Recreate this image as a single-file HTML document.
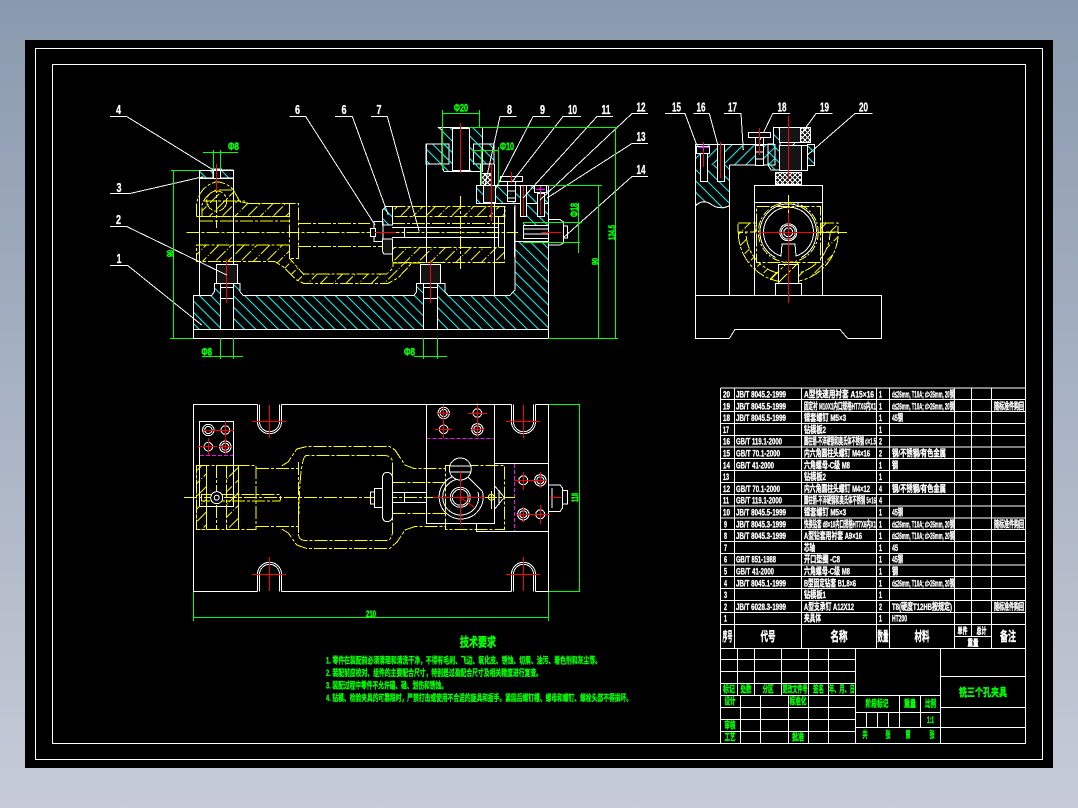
<!DOCTYPE html>
<html><head><meta charset="utf-8"><title>Drawing</title>
<style>
html,body{margin:0;padding:0;width:1078px;height:808px;overflow:hidden;background:linear-gradient(#8a9aae,#c6cbd7)}
svg{position:absolute;left:0;top:0;display:block}
.w{stroke:#fff;fill:none}.wk{stroke:#fff;fill:#000}.wd{stroke:#fff;fill:#141414}
.y{stroke:#ff0;fill:none;stroke-dasharray:13 2 3 2}.ys{stroke:#ff0;fill:none}
.r{stroke:#f00;fill:none;stroke-dasharray:16 2 4 2}.rs{stroke:#f00;fill:none}
.g{stroke:#0f0;fill:none}.m{stroke:#f0f;fill:none;stroke-dasharray:4 2}
.hc{fill:url(#c);stroke:#fff}.hy{fill:url(#h);stroke:#ff0;stroke-dasharray:13 2 3 2}
text{font-family:"Liberation Sans","Noto Sans CJK SC",sans-serif;font-weight:700}
.n{fill:#fff;font-size:12.5px;stroke:#fff;stroke-width:.3px}
.dim{fill:#0f0;font-size:11px;stroke:#0f0;stroke-width:.5px}
.b{fill:#fff;font-size:9.5px;stroke:#fff;stroke-width:.35px}
.bh{fill:#fff;font-size:13px;text-anchor:middle;stroke:#fff;stroke-width:.4px}
.bs{fill:#fff;font-size:9px;text-anchor:middle;stroke:#fff;stroke-width:.4px}
.t{fill:#0f0;font-size:9.5px;text-anchor:middle;stroke:#0f0;stroke-width:.4px}
.tq{fill:#0f0;font-size:9px;stroke:#0f0;stroke-width:.35px}
</style></head><body>
<svg width="1078" height="808" viewBox="0 0 1078 808" shape-rendering="crispEdges" stroke-width="1">
<defs>
<pattern id="c" width="8" height="8" patternUnits="userSpaceOnUse" patternTransform="rotate(-45)"><line x1="4" y1="0" x2="4" y2="8" stroke="#0ff"/></pattern>
<pattern id="c2" width="8" height="8" patternUnits="userSpaceOnUse" patternTransform="rotate(45)"><line x1="4" y1="0" x2="4" y2="8" stroke="#0ff"/></pattern>
<pattern id="h" width="9" height="18" patternUnits="userSpaceOnUse" patternTransform="rotate(45)"><line x1="4" y1="0" x2="4" y2="18" stroke="#ff0" stroke-dasharray="13 2 1 2"/></pattern>
<pattern id="k" width="5" height="5" patternUnits="userSpaceOnUse"><path d="M0 0L5 5M5 0L0 5" stroke="#fff"/></pattern>
</defs>
<rect x="25" y="40" width="1028" height="728" fill="#000"/>
<rect x="35.5" y="48.5" width="1007" height="711" class="w"/>
<rect x="52.5" y="64.5" width="973" height="679" class="w"/>

<!-- FRONT VIEW -->
<path d="M193.3 295.3H211.7L214.3 291.7V283.3H220.3V329.3H193.3Z" class="hc"/>
<path d="M233.7 283.3H240V291.7L243 295.3H414L416.7 291.7V283.3H423.3V329.3H233.7Z" class="hc"/>
<path d="M437.3 283.3H445V291.7L448 295.3H510L515 290V241.7H548.3V329.3H437.3Z" class="hc"/>
<path d="M528 203.3H548.3V225H523V216Z" fill="url(#c)"/>
<rect x="193.5" y="329.5" width="355" height="9" class="w"/>
<path d="M548.5 185.5V330M515 205V241.7M494.5 203V295.3" class="w"/>
<path d="M426.5 144V263M199.5 170V295M233.5 170V264" class="w"/>
<!-- top part -->
<path d="M426 144H449V164H426Z" class="hc"/>
<path d="M473.3 144H494V164H473.3Z" class="hc"/>
<path d="M438.3 127.3H482.7V171.7H444L442 165V130Z" class="hc"/>
<rect x="452.5" y="128.5" width="17" height="42" class="wk"/>
<path d="M476.5 185.5H548.5V203.5H476.5Z" class="hc"/>
<path d="M480.5 164V185.5M494.5 164V185.5" class="w"/>
<rect x="481.5" y="173.5" width="10" height="12" fill="url(#k)" stroke="#fff"/>
<rect x="483.5" y="185.5" width="12" height="17" class="wd"/>
<rect x="500.5" y="176.5" width="22" height="5" class="wk"/>
<path d="M507.5 181V185.5M515.5 181V185.5" class="w"/>
<rect x="507.5" y="185.5" width="8" height="16" class="wk"/><path d="M507.5 191H515.5M507.5 198H515.5" class="w"/>
<rect x="520.5" y="185.5" width="6" height="31" class="wk"/>
<rect x="534.5" y="185.5" width="12" height="7" class="wk"/>
<rect x="537.5" y="193.5" width="7" height="23" class="wk"/>
<!-- casting -->
<path d="M196.7 216.7V203.3Q200 186 216.7 181.7Q228 183 233.3 190L240 201.7L248.3 203.3H298.3V258.3H289.5V203.3M196.7 216.7H290" fill="none" stroke="#ff0" stroke-dasharray="13 2 3 2"/>
<path d="M233.3 190L240 201.7L248.3 203.3H289.5V216.7H202V205Q205 195 216 190Z" class="hy"/>
<circle cx="216.7" cy="201" r="10" class="y"/>
<path d="M196.7 245H289.5V258.3L303.3 274H386.7L393 268V263H420V262.7H392.7V247.3H504.3V262.7H420L411.7 263.3L398 278L388.3 283.3H303.3L296.7 280L283.3 266.7L275 261.7H196.7Z" class="hy"/>
<path d="M392.7 206.7H505V216.7H392.7Z" class="hy"/>
<path d="M186.7 232.5H518M298 223.5H370M298 246.5H382M392 223.5H504M216.7 180V228M203 201H245M200 221H290" class="y"/>
<path d="M426.5 223V263M494.5 207V262M514.5 207V223" class="w"/>
<!-- pins -->
<rect x="216.5" y="264.5" width="21" height="19" class="wd"/>
<rect x="420.5" y="264.5" width="20" height="19" class="wd"/>
<path d="M220.5 283.5V329M233.5 283.5V329M220.5 287.5H233.5M220.5 298.5H233.5M423.5 283.5V329M437.5 283.5V329M423.5 287.5H437.5M423.5 298.5H437.5" class="w"/>
<!-- rod -->
<rect x="374" y="221.5" width="9" height="20" class="wk"/>
<rect x="370.5" y="228.5" width="5" height="8" class="wk"/>
<path d="M382.7 210L386 206.7H392.7V225H382.7Z" class="hc"/>
<path d="M382.7 239H392.7V254H384L382.7 252Z" class="wd"/>
<path d="M392 227.5H498M392 237.5H498M404.5 227V237M498.5 216V247M504.5 206V257M514.5 223V257" class="w"/>
<rect x="523.5" y="225.5" width="25" height="13" class="wk"/>
<path d="M523.5 229H548M523.5 234H548" class="w"/>
<path d="M548.5 219.5H560L563.5 222V243L560 245H548.5ZM563.5 226H567.5V238H563.5" class="wk"/>
<path d="M213.5 170H233.5M199.5 170.5H233.5M199.5 178.5H233.5" class="w"/>
<path d="M199.5 170.5H213V178H199.5ZM220.5 170.5H233.5V178H220.5Z" class="hc"/>
<path d="M213.5 168V178M220.5 168V178M212 169H222" class="w"/>
<!-- red centre -->
<path d="M216.5 164V191M226.5 259V303M430.5 260V303M460.5 123V173M511.5 172V183M523.5 186V216M540.5 193V215" class="rs"/>
<path d="M491.5 165V221" class="rs"/>
<path d="M375 232.5H396M541.7 232.5H561.7" class="rs"/>
<path d="M536 189.5H545M540.5 186V193" stroke="#f0f" fill="none"/>
<path d="M460.5 196V270" class="y"/>
<!-- leaders -->
<g class="w">
<path d="M110 116.5H126.7L213.3 170"/><path d="M110 193.5H130L203.3 176.7"/><path d="M110 226.5H126.7L226.7 275"/><path d="M110 265.5H127.7L201.7 325"/>
<path d="M289.3 116.5H305.7L375 225"/><path d="M335 116.5H352.3L388.3 215"/><path d="M371 116.5H387.3L419.3 231.7"/>
<path d="M516.7 116.5H500L485 185"/><path d="M550 116.5H533L495 190"/><path d="M581 116.5H563L512 182"/><path d="M613 116.5H597L523 198"/>
<path d="M648 113.5H632L540 200"/><path d="M648 143.5H632L547 198"/><path d="M648 176.5H632L563 238"/>
<path d="M665 113.5H685L696.7 145"/><path d="M693.3 113.5H709.3L720 153"/><path d="M724 113.5H741L743.3 150"/><path d="M790 113.5H772.7L760 140"/><path d="M832.7 113.5H816L788.3 151.7"/><path d="M872.3 113.5H855L804 158"/>
</g>
<g class="n">
<text x="116" y="114" textLength="5" lengthAdjust="spacingAndGlyphs">4</text><text x="116.5" y="192" textLength="5" lengthAdjust="spacingAndGlyphs">3</text><text x="116" y="224" textLength="5" lengthAdjust="spacingAndGlyphs">2</text><text x="116.5" y="263" textLength="5" lengthAdjust="spacingAndGlyphs">1</text>
<text x="295" y="114" textLength="5" lengthAdjust="spacingAndGlyphs">6</text><text x="341.5" y="114" textLength="5" lengthAdjust="spacingAndGlyphs">6</text><text x="376.5" y="114" textLength="5" lengthAdjust="spacingAndGlyphs">7</text><text x="507" y="114" textLength="5" lengthAdjust="spacingAndGlyphs">8</text><text x="540" y="114" textLength="5" lengthAdjust="spacingAndGlyphs">9</text><text x="568" y="114" textLength="9" lengthAdjust="spacingAndGlyphs">10</text><text x="601.5" y="114" textLength="9" lengthAdjust="spacingAndGlyphs">11</text><text x="636.5" y="111.5" textLength="9" lengthAdjust="spacingAndGlyphs">12</text><text x="636.5" y="141" textLength="9" lengthAdjust="spacingAndGlyphs">13</text><text x="636.5" y="174" textLength="9" lengthAdjust="spacingAndGlyphs">14</text>
<text x="672" y="111.5" textLength="9" lengthAdjust="spacingAndGlyphs">15</text><text x="696.5" y="111.5" textLength="9" lengthAdjust="spacingAndGlyphs">16</text><text x="728" y="111.5" textLength="9" lengthAdjust="spacingAndGlyphs">17</text><text x="777.5" y="111.5" textLength="9" lengthAdjust="spacingAndGlyphs">18</text><text x="820" y="111.5" textLength="9" lengthAdjust="spacingAndGlyphs">19</text><text x="859" y="111.5" textLength="9" lengthAdjust="spacingAndGlyphs">20</text>
</g>
<!-- green dims -->
<g class="g">
<path d="M173.5 170V338M171 170.5H199M170 338.5H193M213.5 150V170M220.5 150V170M203 152.5H238"/>
<path d="M220.5 338V359M233.5 338V359M202 356.5H243M423.5 338V359M437.5 338V359M414 356.5H447"/>
<path d="M442.5 110V170M479.5 110V127M442 113.5H479M481.5 147V185M498.5 147V185M472 150.5H498"/>
<path d="M469 127.5H618M548 185.5H602M548 338.5H618M598.5 185V338M615.5 127V338M523 222.5H582M523 242.5H580M578.5 203V253"/>
<path d="M193.5 591V621M548.5 591V621M193 617.5H548M548 404.5H580M548 591.5H580M579.5 404V592"/>
</g>
<g class="dim">
<text x="228" y="150" textLength="11" lengthAdjust="spacingAndGlyphs">Φ8</text><text transform="translate(173,257) rotate(-90)" textLength="7" lengthAdjust="spacingAndGlyphs" style="font-size:8px">90</text><text x="201.5" y="355.5" textLength="10.5" lengthAdjust="spacingAndGlyphs">Φ8</text><text x="404" y="355.5" textLength="11" lengthAdjust="spacingAndGlyphs">Φ8</text>
<text x="454" y="111.5" textLength="14" lengthAdjust="spacingAndGlyphs">Φ20</text><text x="500" y="150" textLength="14" lengthAdjust="spacingAndGlyphs">Φ10</text>
<text transform="translate(598,265) rotate(-90)" textLength="7" lengthAdjust="spacingAndGlyphs" style="font-size:8px">90</text>
<text transform="translate(615,240) rotate(-90)" textLength="15" lengthAdjust="spacingAndGlyphs" style="font-size:9px">134.5</text>
<text transform="translate(578,217) rotate(-90)" textLength="14" lengthAdjust="spacingAndGlyphs">Φ18</text>
<text x="366" y="617" textLength="10" lengthAdjust="spacingAndGlyphs" style="font-size:9px">210</text>
<text transform="translate(578,502) rotate(-90)" textLength="9" lengthAdjust="spacingAndGlyphs" style="font-size:9px">118</text>
</g>

<!-- SIDE VIEW -->
<path d="M695.5 295.5H881.5V338.5H847.7L840 329.5H735L729.3 338.5H695.5Z" class="wk"/>
<path d="M695.3 144.3H775V165H695.3Z" fill="url(#c2)"/>
<path d="M695.3 165H729.3V206Q722 212 715 204Q705 198 695.3 206Z" fill="url(#c)"/>
<path d="M695.5 144.5H775V165H729.5M695.5 144V295M729.5 165V295" class="w"/>
<path d="M695.5 206Q703 198 712 205Q720 210 729 206" class="w"/>
<path d="M768 165V144H773.5V127.7H780V170H771Z" class="hc"/>
<rect x="807.5" y="144.5" width="7" height="21" class="hc"/>
<rect x="779.5" y="127.5" width="31" height="15" fill="url(#k)" stroke="#fff"/>
<rect x="779.5" y="127.5" width="21" height="15" class="wd"/>
<rect x="779.5" y="145.5" width="22" height="25" class="wd"/><rect x="801.5" y="145.5" width="6" height="25" class="wk"/>
<rect x="775.5" y="172.5" width="26" height="12" fill="url(#k)" stroke="#fff"/>
<rect x="748.5" y="132.5" width="22" height="5" class="wk"/><path d="M755.5 138V145M763.5 138V145" class="w"/>
<rect x="755.5" y="145.5" width="8" height="20" class="wk"/><path d="M755.5 152H763.5M755.5 159H763.5" class="w"/>
<rect x="700.5" y="153.5" width="7" height="28" class="wk"/><rect x="696.5" y="146.5" width="13" height="7" class="wk"/>
<rect x="717.5" y="144.5" width="7" height="37" class="wk"/>
<rect x="754.5" y="185.5" width="68" height="110" class="w"/><path d="M754.5 202.5H822.5" class="w"/>
<path d="M738.3 232.3A50 50 0 0 0 838.3 232.3H830A42 42 0 0 1 746 232.3Z" class="hy"/>
<path d="M738 223H756V232H738ZM821 223H838V232H821Z" class="hy"/>
<rect x="756.5" y="206.5" width="64" height="56" fill="#000" stroke="#ff0" stroke-dasharray="13 2 3 2"/>
<path d="M754.5 202V295M822.5 202V295" class="w"/>
<circle cx="788.3" cy="232.3" r="30" stroke="#ff0" stroke-dasharray="8 2 2 2" fill="none"/>
<path d="M775.5 257.5A28.3 28.3 0 1 1 801 257.5" class="w"/>
<path d="M781 256A25 25 0 1 1 796 256L795 244H782Z" class="w"/>
<circle cx="788.3" cy="232.3" r="8.5" class="wk"/><circle cx="788.3" cy="232.3" r="7" class="w"/><circle cx="788.3" cy="232.3" r="4.5" class="wk"/>
<rect x="778.5" y="264.5" width="20" height="19" class="wk"/>
<path d="M778 283L798 263M770 280L786 264" class="y"/>
<path d="M775.5 295V283.5H801.5V295" class="w"/>
<path d="M788.5 116V180M788.5 195V303M759.5 128V155M703.5 142V167M720.5 142V178" class="rs"/>
<path d="M759 232.5H817" class="rs"/>
<path d="M817 232.5H847M788.5 195V215" class="y"/>
<path d="M698 147.5H709M703.5 144V151" stroke="#f0f" fill="none"/>

<!-- PLAN VIEW -->
<path d="M257.5 404.5H193.5V591.5H257.5M281.5 404.5H511.5M535.5 404.5H548.5V591.5H535.5M511.5 591.5H281.5" class="w"/>
<path d="M257.5 404.5V421.7A12 12 0 0 0 281.5 421.7V404.5M259.5 404.5V421.7A10 10 0 0 0 279.5 421.7V404.5M511.5 404.5V421.7A12 12 0 0 0 535.5 421.7V404.5M513.5 404.5V421.7A10 10 0 0 0 533.5 421.7V404.5" class="w"/>
<path d="M257.5 591.5V574.3A12 12 0 0 1 281.5 574.3V591.5M259.5 591.5V574.3A10 10 0 0 1 279.5 574.3V591.5M511.5 591.5V574.3A12 12 0 0 1 535.5 574.3V591.5M513.5 591.5V574.3A10 10 0 0 1 533.5 574.3V591.5" class="w"/>
<path d="M252 421.5H286M269.5 405V438M252 574.5H286M269.5 557V591M506 421.5H540M523.5 405V438M506 574.5H540M523.5 557V591" class="rs"/>
<rect x="199.5" y="421.5" width="34" height="85" class="w"/>
<g class="w">
<circle cx="208.3" cy="430" r="5.7"/><circle cx="208.3" cy="430" r="3.6"/><circle cx="225.3" cy="430" r="4.3"/><circle cx="208.3" cy="446.7" r="4.3"/><circle cx="225.3" cy="446.7" r="5.7"/><circle cx="225.3" cy="446.7" r="3.6"/>
<circle cx="443.7" cy="413" r="5.7"/><circle cx="443.7" cy="413" r="3.6"/><circle cx="477.3" cy="413" r="4.3"/><circle cx="443.7" cy="429.3" r="4.3"/><circle cx="477.3" cy="429.3" r="5.7"/><circle cx="477.3" cy="429.3" r="3.6"/>
<circle cx="523.3" cy="480.3" r="4.5"/><circle cx="540.3" cy="480.3" r="5.7"/><circle cx="540.3" cy="480.3" r="3.6"/><circle cx="523.3" cy="514.3" r="5.7"/><circle cx="523.3" cy="514.3" r="3.6"/><circle cx="540.3" cy="514.3" r="4.5"/>
</g>
<path d="M203 430.5H216M225.5 421V437M216 430.5H234M208.5 438V456M198 446.5H217M225.5 438V454M219 446.5H232" class="rs"/>
<path d="M443.5 405V421M437 413.5H450M477.5 403V421M468 413.5H487M443.5 420V438M435 429.5H452M477.5 421V437M471 429.5H484M523.5 472V490M514 480.5H533M540.5 472V488M533 480.5H547M523.5 507V522M516 514.5H531M540.5 505V524M531 514.5H550" class="rs"/>
<path d="M200 455.5H233M426.5 438.5H494M514.5 464V532" class="m"/>
<!-- yellow body -->
<path d="M196.5 465.5H256V529.5H196.5ZM206.5 465V529M216.5 465V529M226.5 465V529M238.5 465V529" class="y"/>
<path d="M196.5 465.5H206.5V529.5H196.5ZM226.5 465.5H238.5V529.5H226.5Z" class="hy"/>
<path d="M256 468.5H298.5M256 526.5H298.5M298.5 462V533Q299 453 307 455.5H385Q393 456 392.5 464V532Q392 541 385 540.5H307Q298 541 298.5 533" class="y"/>
<path d="M281.7 466L288.3 461.7L296.7 449L306 446.7H390L395 450L405 465L413.3 468.3H445.7M281.7 529L288.3 533L296.7 545L306 548.3H390L397.3 541.7L405 530L415 526.5H445.7" class="y"/>
<path d="M201.7 494.5H280Q281 498 280 501H201.7ZM392.7 482.5H445M392.7 513.5H445" class="y"/>
<rect x="445.5" y="465.5" width="59" height="64" class="y"/>
<path d="M184 497.5H515" class="y"/>
<rect x="426.5" y="404.5" width="68" height="119" class="w"/>
<path d="M494.5 463.5H548.5M476.5 523.5V531.5H548.5" class="w"/>
<circle cx="216.7" cy="497.7" r="6" class="wk"/><circle cx="216.7" cy="497.7" r="2.5" class="w"/>
<!-- washer etc -->
<path d="M382.5 478Q382.5 472.5 387 472.5Q392.5 472.5 392.5 478V516Q392.5 521.5 387 521.5Q382.5 521.5 382.5 516Z" class="wk"/>
<rect x="374.5" y="488.5" width="8" height="19" class="wk"/><path d="M374.5 492H370.5V504H374.5" class="w"/>
<path d="M392.5 492.5H426M392.5 502.5H426M404.5 492.5V502.5" class="w"/>
<path d="M460 475A22 22 0 1 0 482.5 491.7L468 477M460 479A18 18 0 1 0 478 492" class="w" />
<circle cx="460.3" cy="497.3" r="10" class="w"/><circle cx="460.3" cy="497.3" r="8" class="w"/>
<circle cx="460.3" cy="469" r="11" class="wk"/><path d="M449.5 466H471M449.5 472H471" class="w"/>
<path d="M494.5 485.7L504.3 497.3L494.5 509.3M499 490V505" class="w"/>
<path d="M548.5 485H560L562.5 488V508L560 511.5H548.5ZM552 488V508M562.5 490.5H567.5V504H562.5" class="wk"/>
<circle cx="491.3" cy="497.3" r="3" class="ys"/><path d="M491.5 491V509M487 497.5H496" class="ys"/>
<path d="M460.5 471V525M433 497.5H485M460.3 497.3L474 507" class="rs"/>
<path d="M550 497.5H561" class="rs"/>

<!-- TECH REQUIREMENTS -->
<text x="460" y="646.5" fill="#0f0" font-size="12.5" textLength="36" lengthAdjust="spacingAndGlyphs" stroke="#0f0" stroke-width=".5">技术要求</text>
<text class="tq" x="326" y="663.5" textLength="275" lengthAdjust="spacingAndGlyphs">1. 零件在装配前必须清理和清洗干净，不得有毛刺、飞边、氧化皮、锈蚀、切屑、油污、着色剂和灰尘等。</text>
<text class="tq" x="326" y="676" textLength="216" lengthAdjust="spacingAndGlyphs">2. 装配前应校对、组件的主要配合尺寸，特别是过盈配合尺寸及相关精度进行复查。</text>
<text class="tq" x="326" y="688.5" textLength="121" lengthAdjust="spacingAndGlyphs">3. 装配过程中零件不允许磕、碰、划伤和锈蚀。</text>
<text class="tq" x="326" y="701" textLength="306" lengthAdjust="spacingAndGlyphs">4. 钻模、检验夹具的可靠限时，严禁打击或使用不合适的旋具和扳手。紧固后螺钉槽、螺母和螺钉、螺栓头部不得损坏。</text>

<!-- BOM GRID -->
<g class="w">
<path d="M720.5 388H1025.5M720.5 399.5H1025.5M720.5 411.5H1025.5M720.5 423.5H1025.5M720.5 435.5H1025.5M720.5 447H1025.5M720.5 458.5H1025.5M720.5 470.5H1025.5M720.5 482.5H1025.5M720.5 494.5H1025.5M720.5 506H1025.5M720.5 518H1025.5M720.5 529.5H1025.5M720.5 541.5H1025.5M720.5 553.5H1025.5M720.5 565H1025.5M720.5 576.5H1025.5M720.5 588.5H1025.5M720.5 600.5H1025.5M720.5 612.5H1025.5M720.5 624.5H1025.5M720.5 648.5H1025.5"/>
<path d="M720.5 388V743.5M734.5 388V648M801.5 388V648M876.5 388V648M889.5 388V648M954.5 388V648M971.5 388V636M991.5 388V648M954.5 636.5H991.5"/>
<path d="M720.5 659.5H855M720.5 671.5H855M720.5 683.5H855M720.5 695.5H940M720.5 707.5H855M720.5 719.5H855M720.5 731.5H855M720.5 743.5H1025.5"/>
<path d="M737.5 648V695M754.5 648V695M781.5 648V695M808.5 648V743M828.5 648V743M855.5 648V743M740.5 695V743M760.5 695V743M788.5 695V743M940.5 648V743"/>
<path d="M855.5 712.5H940.5M855.5 727.5H1025.5M899.5 695V727M920.5 695V727M866.5 712V727M877.5 712V727M888.5 712V727M940.5 676.5H1025.5M940.5 707.5H1025.5"/>
</g>
<g class="b">
<text x="723" y="397.5" textLength="7" lengthAdjust="spacingAndGlyphs">20</text><text x="736" y="397.5" textLength="50" lengthAdjust="spacingAndGlyphs">JB/T 8045.2-1999</text><text x="804" y="397.5" textLength="70" lengthAdjust="spacingAndGlyphs">A型快速用衬套 A15×16</text><text x="879" y="397.5" textLength="3" lengthAdjust="spacingAndGlyphs">1</text><text x="892" y="397.5" textLength="62" lengthAdjust="spacingAndGlyphs">d≤26mm, T10A; d&gt;26mm, 20钢</text>
<text x="723" y="409.3" textLength="7" lengthAdjust="spacingAndGlyphs">19</text><text x="736" y="409.3" textLength="50" lengthAdjust="spacingAndGlyphs">JB/T 8045.5-1999</text><text x="804" y="409.3" textLength="72" lengthAdjust="spacingAndGlyphs">固定衬 M10X1内口规格HT7X6内X1</text><text x="879" y="409.3" textLength="3" lengthAdjust="spacingAndGlyphs">1</text><text x="892" y="409.3" textLength="62" lengthAdjust="spacingAndGlyphs">d≤26mm, T10A; d&gt;26mm, 20钢</text><text x="994" y="409.3" textLength="30" lengthAdjust="spacingAndGlyphs">随标准件购回</text>
<text x="723" y="421.1" textLength="7" lengthAdjust="spacingAndGlyphs">18</text><text x="736" y="421.1" textLength="50" lengthAdjust="spacingAndGlyphs">JB/T 8045.5-1999</text><text x="804" y="421.1" textLength="42" lengthAdjust="spacingAndGlyphs">镗套螺钉 M5×3</text><text x="879" y="421.1" textLength="3" lengthAdjust="spacingAndGlyphs">1</text><text x="892" y="421.1" textLength="11" lengthAdjust="spacingAndGlyphs">45钢</text>
<text x="723" y="432.9" textLength="6" lengthAdjust="spacingAndGlyphs">17</text><text x="804" y="432.9" textLength="22" lengthAdjust="spacingAndGlyphs">钻模板2</text><text x="879" y="432.9" textLength="3" lengthAdjust="spacingAndGlyphs">1</text>
<text x="723" y="444.7" textLength="7" lengthAdjust="spacingAndGlyphs">16</text><text x="736" y="444.7" textLength="46" lengthAdjust="spacingAndGlyphs">GB/T 119.1-2000</text><text x="804" y="444.7" textLength="72" lengthAdjust="spacingAndGlyphs">圆柱销-不淬硬钢和奥氏体不锈钢 d×1.5</text><text x="879" y="444.7" textLength="3" lengthAdjust="spacingAndGlyphs">2</text>
<text x="723" y="456.5" textLength="7" lengthAdjust="spacingAndGlyphs">15</text><text x="736" y="456.5" textLength="44" lengthAdjust="spacingAndGlyphs">GB/T 70.1-2000</text><text x="804" y="456.5" textLength="66" lengthAdjust="spacingAndGlyphs">内六角圆柱头螺钉 M4×16</text><text x="879" y="456.5" textLength="3" lengthAdjust="spacingAndGlyphs">2</text><text x="892" y="456.5" textLength="54" lengthAdjust="spacingAndGlyphs">钢/不锈钢/有色金属</text>
<text x="723" y="468.3" textLength="7" lengthAdjust="spacingAndGlyphs">14</text><text x="736" y="468.3" textLength="38" lengthAdjust="spacingAndGlyphs">GB/T 41-2000</text><text x="804" y="468.3" textLength="46" lengthAdjust="spacingAndGlyphs">六角螺母-C级 M8</text><text x="879" y="468.3" textLength="3" lengthAdjust="spacingAndGlyphs">1</text><text x="892" y="468.3" textLength="6" lengthAdjust="spacingAndGlyphs">钢</text>
<text x="723" y="480.1" textLength="6" lengthAdjust="spacingAndGlyphs">13</text><text x="804" y="480.1" textLength="22" lengthAdjust="spacingAndGlyphs">钻模板2</text><text x="879" y="480.1" textLength="3" lengthAdjust="spacingAndGlyphs">1</text>
<text x="723" y="491.9" textLength="7" lengthAdjust="spacingAndGlyphs">12</text><text x="736" y="491.9" textLength="44" lengthAdjust="spacingAndGlyphs">GB/T 70.1-2000</text><text x="804" y="491.9" textLength="66" lengthAdjust="spacingAndGlyphs">内六角圆柱头螺钉 M4×12</text><text x="879" y="491.9" textLength="3" lengthAdjust="spacingAndGlyphs">4</text><text x="892" y="491.9" textLength="54" lengthAdjust="spacingAndGlyphs">钢/不锈钢/有色金属</text>
<text x="723" y="503.7" textLength="6" lengthAdjust="spacingAndGlyphs">11</text><text x="736" y="503.7" textLength="46" lengthAdjust="spacingAndGlyphs">GB/T 119.1-2000</text><text x="804" y="503.7" textLength="72" lengthAdjust="spacingAndGlyphs">圆柱销-不淬硬钢和奥氏体不锈钢 5×16</text><text x="879" y="503.7" textLength="3" lengthAdjust="spacingAndGlyphs">4</text>
<text x="723" y="515.5" textLength="7" lengthAdjust="spacingAndGlyphs">10</text><text x="736" y="515.5" textLength="50" lengthAdjust="spacingAndGlyphs">JB/T 8045.5-1999</text><text x="804" y="515.5" textLength="42" lengthAdjust="spacingAndGlyphs">镗套螺钉 M5×3</text><text x="879" y="515.5" textLength="3" lengthAdjust="spacingAndGlyphs">1</text><text x="892" y="515.5" textLength="11" lengthAdjust="spacingAndGlyphs">45钢</text>
<text x="724" y="527.3" textLength="3" lengthAdjust="spacingAndGlyphs">9</text><text x="736" y="527.3" textLength="50" lengthAdjust="spacingAndGlyphs">JB/T 8045.3-1999</text><text x="804" y="527.3" textLength="72" lengthAdjust="spacingAndGlyphs">快换钻套 d8×10内口规格HT7X6内X1</text><text x="879" y="527.3" textLength="3" lengthAdjust="spacingAndGlyphs">1</text><text x="892" y="527.3" textLength="62" lengthAdjust="spacingAndGlyphs">d≤26mm, T10A; d&gt;26mm, 20钢</text><text x="994" y="527.3" textLength="30" lengthAdjust="spacingAndGlyphs">随标准件购回</text>
<text x="724" y="539.1" textLength="3" lengthAdjust="spacingAndGlyphs">8</text><text x="736" y="539.1" textLength="50" lengthAdjust="spacingAndGlyphs">JB/T 8045.3-1999</text><text x="804" y="539.1" textLength="58" lengthAdjust="spacingAndGlyphs">A型钻套用衬套 A9×16</text><text x="879" y="539.1" textLength="3" lengthAdjust="spacingAndGlyphs">1</text><text x="892" y="539.1" textLength="62" lengthAdjust="spacingAndGlyphs">d≤26mm, T10A; d&gt;26mm, 20钢</text>
<text x="724" y="550.9" textLength="3" lengthAdjust="spacingAndGlyphs">7</text><text x="804" y="550.9" textLength="11" lengthAdjust="spacingAndGlyphs">芯轴</text><text x="879" y="550.9" textLength="3" lengthAdjust="spacingAndGlyphs">1</text><text x="892" y="550.9" textLength="6" lengthAdjust="spacingAndGlyphs">45</text>
<text x="724" y="562.7" textLength="3" lengthAdjust="spacingAndGlyphs">6</text><text x="736" y="562.7" textLength="40" lengthAdjust="spacingAndGlyphs">GB/T 851-1988</text><text x="804" y="562.7" textLength="36" lengthAdjust="spacingAndGlyphs">开口垫圈 -C8</text><text x="879" y="562.7" textLength="3" lengthAdjust="spacingAndGlyphs">1</text><text x="892" y="562.7" textLength="11" lengthAdjust="spacingAndGlyphs">45钢</text>
<text x="724" y="574.5" textLength="3" lengthAdjust="spacingAndGlyphs">5</text><text x="736" y="574.5" textLength="38" lengthAdjust="spacingAndGlyphs">GB/T 41-2000</text><text x="804" y="574.5" textLength="46" lengthAdjust="spacingAndGlyphs">六角螺母-C级 M8</text><text x="879" y="574.5" textLength="3" lengthAdjust="spacingAndGlyphs">1</text><text x="892" y="574.5" textLength="6" lengthAdjust="spacingAndGlyphs">钢</text>
<text x="724" y="586.3" textLength="3" lengthAdjust="spacingAndGlyphs">4</text><text x="736" y="586.3" textLength="50" lengthAdjust="spacingAndGlyphs">JB/T 8045.1-1999</text><text x="804" y="586.3" textLength="52" lengthAdjust="spacingAndGlyphs">B型固定钻套 B1.8×6</text><text x="879" y="586.3" textLength="3" lengthAdjust="spacingAndGlyphs">1</text><text x="892" y="586.3" textLength="62" lengthAdjust="spacingAndGlyphs">d≤26mm, T10A; d&gt;26mm, 20钢</text>
<text x="724" y="598.1" textLength="3" lengthAdjust="spacingAndGlyphs">3</text><text x="804" y="598.1" textLength="22" lengthAdjust="spacingAndGlyphs">钻模板1</text><text x="879" y="598.1" textLength="3" lengthAdjust="spacingAndGlyphs">1</text>
<text x="724" y="609.9" textLength="3" lengthAdjust="spacingAndGlyphs">2</text><text x="736" y="609.9" textLength="50" lengthAdjust="spacingAndGlyphs">JB/T 6028.3-1999</text><text x="804" y="609.9" textLength="50" lengthAdjust="spacingAndGlyphs">A型支承钉 A12X12</text><text x="879" y="609.9" textLength="3" lengthAdjust="spacingAndGlyphs">2</text><text x="892" y="609.9" textLength="60" lengthAdjust="spacingAndGlyphs">T8(硬度T12HB按规定)</text><text x="994" y="609.9" textLength="30" lengthAdjust="spacingAndGlyphs">随标准件购回</text>
<text x="724" y="621.7" textLength="3" lengthAdjust="spacingAndGlyphs">1</text><text x="804" y="621.7" textLength="17" lengthAdjust="spacingAndGlyphs">夹具体</text><text x="879" y="621.7" textLength="3" lengthAdjust="spacingAndGlyphs">1</text><text x="892" y="621.7" textLength="15" lengthAdjust="spacingAndGlyphs">HT200</text>
</g>
<g class="bh">
<text x="727.5" y="641" textLength="10" lengthAdjust="spacingAndGlyphs">序号</text><text x="768" y="641" textLength="15" lengthAdjust="spacingAndGlyphs">代号</text><text x="839" y="641" textLength="17" lengthAdjust="spacingAndGlyphs">名称</text><text x="883" y="641" textLength="11" lengthAdjust="spacingAndGlyphs">数量</text><text x="922" y="641" textLength="15" lengthAdjust="spacingAndGlyphs">材料</text><text x="1008" y="641" textLength="16" lengthAdjust="spacingAndGlyphs">备注</text>
</g>
<g class="bs"><text x="962.5" y="634" textLength="10" lengthAdjust="spacingAndGlyphs">单件</text><text x="981.5" y="634" textLength="10" lengthAdjust="spacingAndGlyphs">总计</text><text x="973" y="646" textLength="11" lengthAdjust="spacingAndGlyphs">重量</text></g>

<!-- TITLE BLOCK -->
<g class="t">
<text x="729" y="692.5" textLength="12" lengthAdjust="spacingAndGlyphs">标记</text><text x="746" y="692.5" textLength="11" lengthAdjust="spacingAndGlyphs">处数</text><text x="768" y="692.5" textLength="11" lengthAdjust="spacingAndGlyphs">分区</text><text x="795" y="692.5" textLength="25" lengthAdjust="spacingAndGlyphs">更改文件号</text><text x="818.5" y="692.5" textLength="11" lengthAdjust="spacingAndGlyphs">签名</text><text x="842" y="692.5" textLength="26" lengthAdjust="spacingAndGlyphs">年、月、日</text>
<text x="730" y="704.5" textLength="11" lengthAdjust="spacingAndGlyphs">设计</text><text x="798" y="704.5" textLength="17" lengthAdjust="spacingAndGlyphs">标准化</text><text x="730" y="728.5" textLength="11" lengthAdjust="spacingAndGlyphs">审核</text><text x="730" y="740.5" textLength="11" lengthAdjust="spacingAndGlyphs">工艺</text><text x="798" y="740.5" textLength="12" lengthAdjust="spacingAndGlyphs">批准</text>
<text x="877" y="707" textLength="23" lengthAdjust="spacingAndGlyphs">阶段标记</text><text x="910" y="707" textLength="12" lengthAdjust="spacingAndGlyphs">重量</text><text x="930.5" y="707" textLength="11" lengthAdjust="spacingAndGlyphs">比例</text><text x="930.5" y="723" textLength="7" lengthAdjust="spacingAndGlyphs">1:1</text>
<text x="865" y="738" textLength="5" lengthAdjust="spacingAndGlyphs">共</text><text x="888" y="738" textLength="5" lengthAdjust="spacingAndGlyphs">张</text><text x="908" y="738" textLength="5" lengthAdjust="spacingAndGlyphs">第</text><text x="932" y="738" textLength="5" lengthAdjust="spacingAndGlyphs">张</text>
<text x="983" y="696" textLength="48" lengthAdjust="spacingAndGlyphs" style="font-size:11px">铣三个孔夹具</text>
</g>
</svg>
</body></html>
